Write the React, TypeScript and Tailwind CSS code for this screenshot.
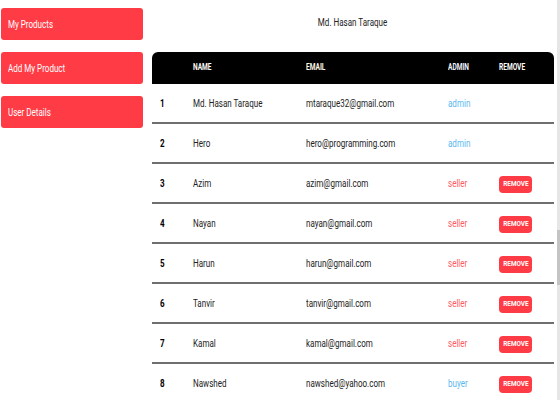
import React from "react";

const users = [
  { n: 1, name: "Md. Hasan Taraque", email: "mtaraque32@gmail.com", role: "admin" },
  { n: 2, name: "Hero", email: "hero@programming.com", role: "admin" },
  { n: 3, name: "Azim", email: "azim@gmail.com", role: "seller" },
  { n: 4, name: "Nayan", email: "nayan@gmail.com", role: "seller" },
  { n: 5, name: "Harun", email: "harun@gmail.com", role: "seller" },
  { n: 6, name: "Tanvir", email: "tanvir@gmail.com", role: "seller" },
  { n: 7, name: "Kamal", email: "kamal@gmail.com", role: "seller" },
  { n: 8, name: "Nawshed", email: "nawshed@yahoo.com", role: "buyer" },
];

function T({ children, center }: { children: React.ReactNode; center?: boolean }) {
  return (
    <span className={`inline-block whitespace-nowrap scale-x-[0.73] ${center ? "origin-center" : "origin-left"}`}>
      {children}
    </span>
  );
}

export default function App() {
  return (
    <div className="w-[560px] h-[400px] overflow-hidden bg-white flex font-['Roboto',sans-serif]">
      <aside className="w-[143px] shrink-0 pl-[1px] pt-2 flex flex-col gap-3">
        {["My Products", "Add My Product", "User Details"].map((t) => (
          <div key={t} className="h-8 rounded-[3px] bg-[#ff3b46] text-white text-[11px] flex items-center pl-[7px] pt-[3px]">
            <T>{t}</T>
          </div>
        ))}
      </aside>
      <main className="flex-1 pl-[9px] pr-[3px] flex flex-col">
        <div className="h-[52px] shrink-0 flex items-center justify-center text-[11px] text-[#222] pb-[6px]">
          <T center>Md. Hasan Taraque</T>
        </div>
        <div className="grid grid-cols-[41px_113px_142px_51px_1fr] h-8 shrink-0 bg-black rounded-t-[6px] text-white text-[9px] font-bold items-center">
          <div></div>
          <div><T>NAME</T></div>
          <div className="text-[#fffbe8]"><T>EMAIL</T></div>
          <div className="text-[#f2f6ff]"><T>ADMIN</T></div>
          <div><T>REMOVE</T></div>
        </div>
        {users.map((u) => (
          <div
            key={u.n}
            className="grid grid-cols-[41px_113px_142px_51px_1fr] h-10 shrink-0 items-center text-[11px] text-[#222] border-b-2 border-[#6f6f6f] pt-[2px]"
          >
            <div className="pl-2 font-bold text-black"><T>{u.n}</T></div>
            <div><T>{u.name}</T></div>
            <div><T>{u.email}</T></div>
            <div className={u.role === "seller" ? "text-[#ff5a62]" : "text-[#5ab8f0]"}><T>{u.role}</T></div>
            <div>
              {u.role !== "admin" && (
                <span className="inline-flex items-center justify-center w-[33px] h-[17px] rounded-[4px] bg-[#ff3b46] text-white text-[8px] font-bold">
                  <span className="inline-block scale-x-[0.8]">REMOVE</span>
                </span>
              )}
            </div>
          </div>
        ))}
      </main>
      <div className="w-[3px] shrink-0 bg-[#e6e6e6] relative">
        <div className="absolute left-0 top-[230px] w-[3px] h-[55px] bg-[#c4c4c4]"></div>
      </div>
    </div>
  );
}
